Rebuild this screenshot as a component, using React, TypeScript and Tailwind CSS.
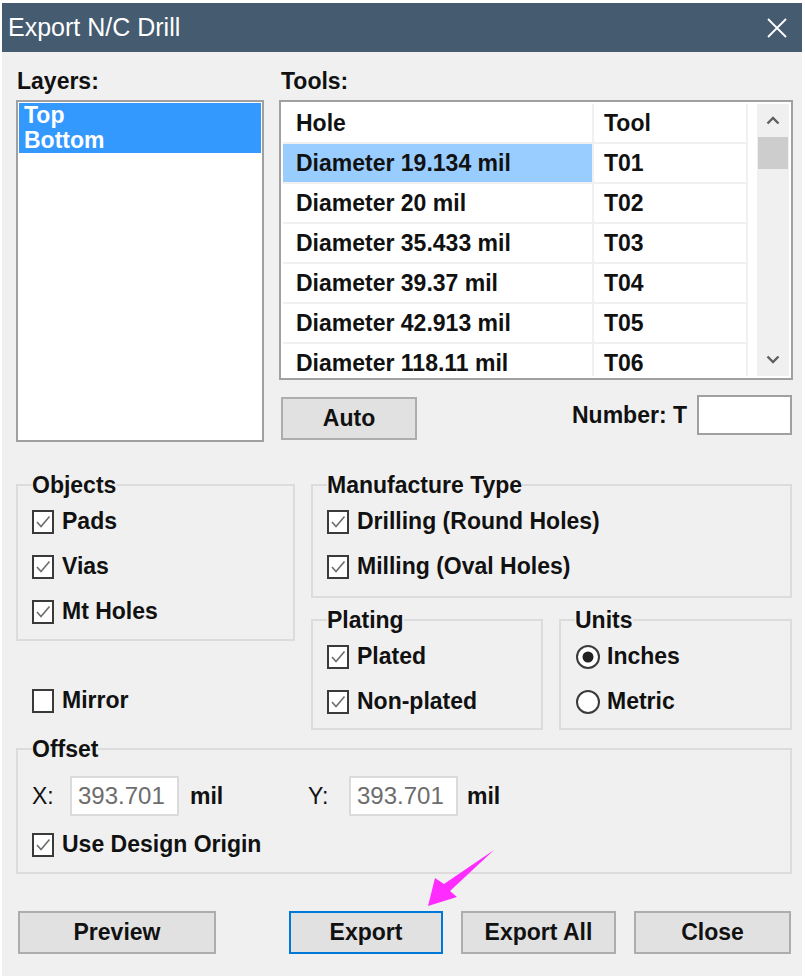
import React from 'react';

const HOLES = [
  { hole: 'Diameter 19.134 mil', tool: 'T01', selected: true },
  { hole: 'Diameter 20 mil', tool: 'T02' },
  { hole: 'Diameter 35.433 mil', tool: 'T03' },
  { hole: 'Diameter 39.37 mil', tool: 'T04' },
  { hole: 'Diameter 42.913 mil', tool: 'T05' },
  { hole: 'Diameter 118.11 mil', tool: 'T06' },
];

function Check({ checked = true }: { checked?: boolean }) {
  return (
    <span className="flex h-[24px] w-[22px] shrink-0 items-center justify-center border-2 border-[#3a3a3a] bg-white">
      {checked && (
        <svg width="16" height="16" viewBox="0 0 16 16">
          <path d="M2 8 L6 12.5 L14.5 2.5" fill="none" stroke="#6e6e6e" strokeWidth="1.6" />
        </svg>
      )}
    </span>
  );
}

function Radio({ checked = false }: { checked?: boolean }) {
  return (
    <svg width="26" height="26" viewBox="0 0 26 26" className="shrink-0">
      <circle cx="13" cy="13" r="11" fill="white" stroke="#3a3a3a" strokeWidth="2" />
      {checked && <circle cx="13" cy="13" r="5.5" fill="#222" />}
    </svg>
  );
}

function CheckRow({ label, checked = true }: { label: string; checked?: boolean }) {
  return (
    <div className="flex h-[45px] items-center gap-[8px]">
      <Check checked={checked} />
      <span>{label}</span>
    </div>
  );
}

function Group({ title, className, children }: { title: string; className: string; children: React.ReactNode }) {
  return (
    <fieldset className={`border-2 border-[#dcdcdc] px-[14px] ${className}`}>
      <legend className="px-0 leading-[20px]">{title}</legend>
      {children}
    </fieldset>
  );
}

function Button({ label, className }: { label: string; className: string }) {
  return (
    <button className={`flex h-[43px] items-center justify-center border-2 bg-[#e1e1e1] font-bold ${className}`}>
      {label}
    </button>
  );
}

export default function App() {
  return (
    <div className="relative h-[976px] w-[805px] overflow-hidden bg-white pl-[2px] pt-[3px] font-['Liberation_Sans',Arial,sans-serif] text-[23px] font-bold text-[#111]">
      <div className="h-full w-[800px] bg-[#f0f0f0]">
        {/* Title bar */}
        <div className="flex h-[49px] items-center justify-between bg-[#445b70] pl-[6px] pr-[14px]">
          <span className="text-[25px] font-normal text-white">Export N/C Drill</span>
          <svg width="22" height="22" viewBox="0 0 22 22">
            <path d="M2 2 L20 20 M20 2 L2 20" stroke="white" strokeWidth="1.8" />
          </svg>
        </div>

        <div className="pl-[14px] pt-[10px]">
          {/* Layers / Tools */}
          <div className="flex w-[777px] gap-[15px]">
            <div className="flex w-[248px] flex-col">
              <div className="flex h-[38px] items-center pl-[1px]">Layers:</div>
              <div className="h-[342px] border-2 border-[#a0a0a0] bg-white p-[1px]">
                <div className="bg-[#3399ff] pl-[5px] leading-[25px] text-white">
                  <div>Top</div>
                  <div>Bottom</div>
                </div>
              </div>
            </div>

            <div className="flex w-[514px] flex-col">
              <div className="flex h-[38px] items-center pl-[2px]">Tools:</div>
              <div className="flex h-[280px] border-2 border-[#a0a0a0] bg-white p-[2px]">
                <div className="flex-1 overflow-hidden">
                  <div className="flex h-[40px]">
                    <div className="flex w-[311px] items-center border-b-2 border-r-2 border-[#f0f0f0] pl-[13px]">Hole</div>
                    <div className="flex w-[154px] items-center border-b-2 border-r-2 border-[#f0f0f0] pl-[10px]">Tool</div>
                  </div>
                  {HOLES.map((h) => (
                    <div key={h.tool} className="flex h-[40px]">
                      <div
                        className={`flex w-[311px] items-center border-b-2 border-r-2 border-[#f0f0f0] pl-[13px] ${
                          h.selected ? 'bg-[#99cdff]' : ''
                        }`}
                      >
                        {h.hole}
                      </div>
                      <div className="flex w-[154px] items-center border-b-2 border-r-2 border-[#f0f0f0] pl-[10px]">{h.tool}</div>
                    </div>
                  ))}
                </div>
                {/* Scrollbar */}
                <div className="flex w-[32px] flex-col bg-[#f0f0f0]">
                  <div className="flex h-[33px] items-center justify-center">
                    <svg width="14" height="9" viewBox="0 0 14 9">
                      <path d="M1.5 7.5 L7 2 L12.5 7.5" fill="none" stroke="#606060" strokeWidth="2.4" />
                    </svg>
                  </div>
                  <div className="mx-[1px] h-[32px] bg-[#cdcdcd]" />
                  <div className="flex-1" />
                  <div className="flex h-[33px] items-center justify-center">
                    <svg width="14" height="9" viewBox="0 0 14 9">
                      <path d="M1.5 1.5 L7 7 L12.5 1.5" fill="none" stroke="#606060" strokeWidth="2.4" />
                    </svg>
                  </div>
                </div>
              </div>

              <div className="mt-[15px] flex items-start">
                <Button label="Auto" className="ml-[2px] mt-[2px] w-[136px] border-[#adadad]" />
                <div className="flex-1" />
                <div className="flex h-[40px] items-center">Number: T</div>
                <div className="ml-[10px] mr-[1px] h-[40px] w-[95px] border-2 border-[#a0a0a0] bg-white" />
              </div>
            </div>
          </div>

          {/* Groups */}
          <div className="mt-[33px] flex w-[776px] gap-[16px]">
            <div className="flex w-[279px] flex-col">
              <Group title="Objects" className="pb-[5px] pt-[4px]">
                <CheckRow label="Pads" />
                <CheckRow label="Vias" />
                <CheckRow label="Mt Holes" />
              </Group>
              <div className="mt-[37px] pl-[16px]">
                <CheckRow label="Mirror" checked={false} />
              </div>
            </div>

            <div className="flex w-[481px] flex-col">
              <Group title="Manufacture Type" className="pb-[7px] pt-[4px]">
                <CheckRow label="Drilling (Round Holes)" />
                <CheckRow label="Milling (Oval Holes)" />
              </Group>
              <div className="mt-[12px] flex gap-[16px]">
                <Group title="Plating" className="w-[232px] pb-[4px] pt-[4px]">
                  <CheckRow label="Plated" />
                  <CheckRow label="Non-plated" />
                </Group>
                <Group title="Units" className="w-[233px] pb-[4px] pt-[4px]">
                  <div className="flex h-[45px] items-center gap-[6px]">
                    <Radio checked />
                    <span>Inches</span>
                  </div>
                  <div className="flex h-[45px] items-center gap-[6px]">
                    <Radio />
                    <span>Metric</span>
                  </div>
                </Group>
              </div>
            </div>
          </div>

          {/* Offset */}
          <Group title="Offset" className="mt-[9px] w-[776px] pb-[5px] pt-[17px]">
            <div className="flex h-[40px] items-center">
              <div className="flex w-[276px] items-center">
                <span className="w-[38px] font-normal">X:</span>
                <div className="flex h-[40px] w-[109px] items-center border-2 border-[#dadada] bg-white pl-[6px] text-[24px] font-normal text-[#6d6d6d]">
                  393.701
                </div>
                <span className="ml-[11px]">mil</span>
              </div>
              <span className="w-[41px] font-normal">Y:</span>
              <div className="flex h-[40px] w-[109px] items-center border-2 border-[#dadada] bg-white pl-[6px] text-[24px] font-normal text-[#6d6d6d]">
                393.701
              </div>
              <span className="ml-[9px]">mil</span>
            </div>
            <div className="mt-[6px]">
              <CheckRow label="Use Design Origin" />
            </div>
          </Group>

          {/* Buttons */}
          <div className="mt-[37px] flex w-[777px]">
            <Button label="Preview" className="ml-[2px] w-[198px] border-[#adadad]" />
            <Button label="Export" className="ml-[73px] w-[154px] border-[#0078d7]" />
            <Button label="Export All" className="ml-[18px] w-[155px] border-[#adadad]" />
            <Button label="Close" className="ml-[18px] w-[157px] border-[#adadad]" />
          </div>
        </div>
      </div>

      {/* Annotation arrow */}
      <svg className="absolute left-[420px] top-[845px]" width="80" height="66" viewBox="0 0 80 66">
        <polygon points="8,61 15,33 24,39 74,5 30,46 37,52" fill="#ff2bff" />
      </svg>
    </div>
  );
}
